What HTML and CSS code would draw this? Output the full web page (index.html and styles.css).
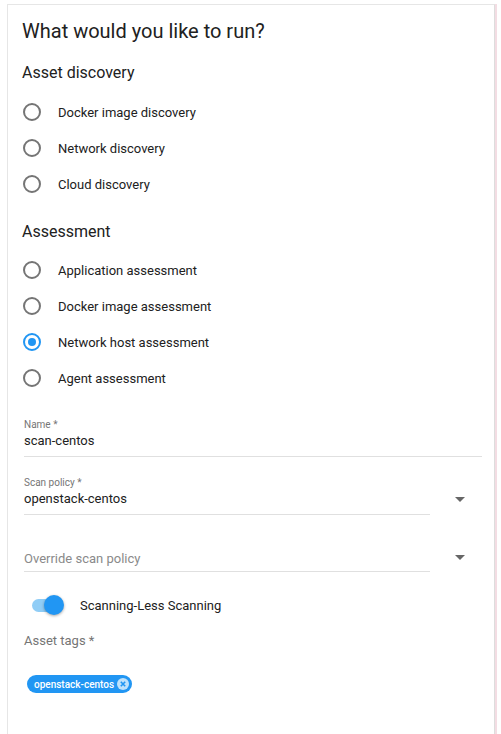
FILE: index.html
```html
<!DOCTYPE html>
<html>
<head>
<meta charset="utf-8">
<link rel="stylesheet" href="styles.css">
</head>
<body>
<div class="card">
  <h1 class="title">What would you like to run?</h1>
  <h2 class="section">Asset discovery</h2>
  <div class="radios">
    <label class="radio"><span class="dot"></span>Docker image discovery</label>
    <label class="radio"><span class="dot"></span>Network discovery</label>
    <label class="radio"><span class="dot"></span>Cloud discovery</label>
  </div>
  <h2 class="section sec2">Assessment</h2>
  <div class="radios r2">
    <label class="radio"><span class="dot"></span>Application assessment</label>
    <label class="radio"><span class="dot"></span>Docker image assessment</label>
    <label class="radio"><span class="dot on"></span>Network host assessment</label>
    <label class="radio"><span class="dot"></span>Agent assessment</label>
  </div>

  <div class="field name">
    <div class="flabel">Name *</div>
    <div class="fvalue">scan-centos</div>
  </div>

  <div class="select-row policy">
    <div class="field sel">
      <div class="flabel">Scan policy *</div>
      <div class="fvalue">openstack-centos</div>
    </div>
    <span class="arrow"></span>
  </div>

  <div class="select-row override">
    <div class="field sel">
      <div class="fvalue placeholder">Override scan policy</div>
    </div>
    <span class="arrow a2"></span>
  </div>

  <div class="toggle-row">
    <span class="toggle"><span class="track"></span><span class="thumb"></span></span>
    <span class="toggle-label">Scanning-Less Scanning</span>
  </div>

  <div class="tags-label">Asset tags *</div>
  <div class="chips">
    <span class="chip">openstack-centos<span class="chip-x"><svg width="12" height="12" viewBox="0 0 12 12"><circle cx="6" cy="6" r="6" fill="#bfe2fb"/><path d="M3.8 3.8 L8.2 8.2 M8.2 3.8 L3.8 8.2" stroke="#2196f3" stroke-width="1.6"/></svg></span></span>
  </div>
</div>
</body>
</html>
```
FILE: styles.css
```css
html, body { margin: 0; padding: 0; background: #fff; }
body {
  font-family: Roboto, "Noto Sans", sans-serif;
  color: #212121;
  height: 734px;
  overflow: hidden;
}
.card {
  margin: 4px 0 0 7px;
  width: 488px;
  height: 730px;
  border-top: 1px solid #e6e6e6;
  border-left: 1px solid #e6e6e6;
  border-right: 1px solid #ddd;
  box-shadow: 2px 0 0 #f3dde3;
  box-sizing: border-box;
  padding: 0 0 0 14px;
}
.title {
  margin: 14px 0 0 0;
  font-size: 20px;
  font-weight: 400;
  line-height: 24px;
  color: #212121;
}
.section {
  margin: 20px 0 0 0;
  font-size: 16px;
  font-weight: 400;
  line-height: 20px;
  color: #212121;
}
.sec2 { margin-top: 20px; }
.radios {
  display: flex;
  flex-direction: column;
  margin-top: 11px;
}
.r2 { margin-top: 10px; }
.radio {
  display: flex;
  align-items: center;
  height: 36px;
  font-size: 13px;
  color: #212121;
}
.dot {
  box-sizing: border-box;
  width: 18px;
  height: 18px;
  border: 2px solid #757575;
  border-radius: 50%;
  margin-left: 1px;
  margin-right: 17px;
  display: flex;
  align-items: center;
  justify-content: center;
}
.dot.on { border-color: #2196f3; }
.dot.on::after {
  content: "";
  width: 8px;
  height: 8px;
  border-radius: 50%;
  background: #2196f3;
}
.field {
  margin-left: 2px;
  border-bottom: 1px solid #e0e0e0;
}
.name { margin-top: 23px; width: 458px; }
.flabel {
  font-size: 10px;
  line-height: 12px;
  color: #757575;
}
.fvalue {
  font-size: 13px;
  line-height: 16px;
  padding: 2px 0 7px;
  color: #212121;
}
.placeholder { color: #8a8a8a; padding: 0 0 4px; }
.select-row {
  display: flex;
  align-items: flex-end;
}
.sel { width: 406px; }
.policy { margin-top: 20px; }
.override { margin-top: 36px; }
.arrow {
  width: 0; height: 0;
  border-left: 5px solid transparent;
  border-right: 5px solid transparent;
  border-top: 5px solid #666;
  margin-left: 25px;
  margin-bottom: 13px;
}
.a2 { margin-bottom: 12px; }
.toggle-row {
  display: flex;
  align-items: center;
  margin-top: 21px;
  height: 24px;
}
.toggle {
  position: relative;
  width: 34px;
  height: 20px;
  margin-left: 10px;
  margin-right: 14px;
}
.track {
  position: absolute;
  left: 0; top: 4px;
  width: 30px; height: 13px;
  border-radius: 7px;
  background: #90cdf6;
}
.thumb {
  position: absolute;
  left: 12px; top: 0;
  width: 20px; height: 20px;
  border-radius: 50%;
  background: #2196f3;
  box-shadow: 0 1px 3px rgba(0,0,0,0.35);
}
.toggle-label { font-size: 13px; color: #212121; }
.tags-label {
  margin-top: 16px;
  margin-left: 2px;
  font-size: 13px;
  color: #757575;
}
.chips { margin-top: 27px; margin-left: 5px; display: flex; }
.chip {
  display: inline-flex;
  align-items: center;
  height: 18px;
  padding: 0 3px 0 7px;
  border-radius: 9px;
  background: #2196f3;
  color: #fff;
  font-size: 10px;
  font-weight: 500;
}
.chip-x { display: inline-flex; margin-left: 3px; }
```
